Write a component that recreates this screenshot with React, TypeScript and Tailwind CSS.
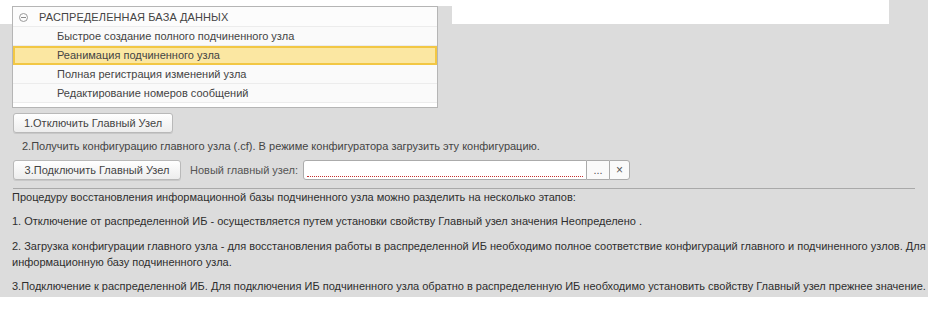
import React from 'react';

const rows = [
  'Быстрое создание полного подчиненного узла',
  'Реанимация подчиненного узла',
  'Полная регистрация изменений узла',
  'Редактирование номеров сообщений',
];

function Btn({ children, className = '' }: { children: React.ReactNode; className?: string }) {
  return (
    <div
      className={`flex h-[20px] items-center justify-center rounded-[3px] border border-[#b9b9b9] bg-gradient-to-b from-white to-[#ededed] text-[11px] text-[#444] shadow-[0_1px_0_#c8c8c8] ${className}`}
    >
      {children}
    </div>
  );
}

export default function App() {
  return (
    <div className="h-[310px] w-[940px] bg-white font-['Liberation_Sans',Arial,sans-serif]">
      <div className="h-[297px] w-[928px] overflow-hidden bg-[#dcdcdc]">
        {/* top strip */}
        <div className="flex items-start">
          <div className="h-[24px] w-[12px] bg-white" />
          <div className="w-[426px]">
            <div className="h-[6px] bg-white" />
            <div className="h-[102px] border border-[#b5b5b5] bg-white text-[11px] text-[#444]">
              <div className="flex h-[20px] items-center border-b border-[#ececec] bg-[#fcfcfc] pt-px">
                <span className="ml-[6px] flex h-[9px] w-[9px] items-center justify-center rounded-full border border-[#9a9a9a]">
                  <span className="h-px w-[5px] bg-[#8a8a8a]" />
                </span>
                <span className="ml-[11px] tracking-[0.1px]">РАСПРЕДЕЛЕННАЯ БАЗА ДАННЫХ</span>
              </div>
              {rows.map((r, i) =>
                i === 1 ? (
                  <div
                    key={r}
                    className="flex h-[19px] items-center border-2 border-[#f2c744] bg-[#fbe7a2] pl-[42px]"
                  >
                    {r}
                  </div>
                ) : (
                  <div key={r} className="flex h-[19px] items-center border-b border-[#ececec] bg-[#fafafa] pl-[44px]">
                    {r}
                  </div>
                )
              )}
            </div>
          </div>
          <div className="w-[14px]">
            <div className="h-[6px] bg-white" />
          </div>
          <div className="h-[24px] w-[437px] bg-white" />
        </div>

        {/* actions */}
        <div className="pl-[13px] pt-[5px]">
          <Btn className="w-[160px]">1.Отключить Главный Узел</Btn>
        </div>
        <div className="pl-[22px] pt-[7px] text-[11px] leading-[13px] text-[#444]">
          2.Получить конфигурацию главного узла (.cf). В режиме конфигуратора загрузить эту конфигурацию.
        </div>
        <div className="flex items-center pl-[13px] pt-[7px]">
          <Btn className="w-[168px]">3.Подключить Главный Узел</Btn>
          <span className="ml-[9px] text-[11px] text-[#555]">Новый главный узел:</span>
          <div className="ml-[5px] flex h-[20px] items-stretch">
            <div className="flex w-[284px] items-end rounded-l-[3px] border border-[#ababab] bg-white px-[3px] pb-[2px]">
              <div className="h-0 w-full border-b border-dotted border-[#c43030]" />
            </div>
            <div className="flex w-[22px] items-center justify-center border-y border-[#ababab] bg-[#fafafa] text-[11px] leading-none text-[#555]">
              ...
            </div>
            <div className="flex w-[21px] items-center justify-center rounded-r-[3px] border border-[#ababab] bg-[#fafafa] text-[12px] leading-none text-[#555]">
              ×
            </div>
          </div>
        </div>

        <div className="ml-[13px] mt-[8px] h-px w-[902px] bg-[#a9a9a9]" />

        {/* description */}
        <div className="overflow-hidden whitespace-nowrap pl-[12px] text-[11px] leading-[16px] text-[#2e2e2e]">
          <p>Процедуру восстановления информационной базы подчиненного узла можно разделить на несколько этапов:</p>
          <p className="mt-[8px]">
            1. Отключение от распределенной ИБ - осуществляется путем установки свойству Главный узел значения Неопределено .
          </p>
          <p className="mt-[9px]">
            2. Загрузка конфигурации главного узла - для восстановления работы в распределенной ИБ необходимо полное соответствие конфигураций главного и подчиненного узлов. Для
          </p>
          <p>информационную базу подчиненного узла.</p>
          <p className="mt-[8px]">
            3.Подключение к распределенной ИБ. Для подключения ИБ подчиненного узла обратно в распределенную ИБ необходимо установить свойству Главный узел прежнее значение.
          </p>
        </div>
      </div>
    </div>
  );
}
